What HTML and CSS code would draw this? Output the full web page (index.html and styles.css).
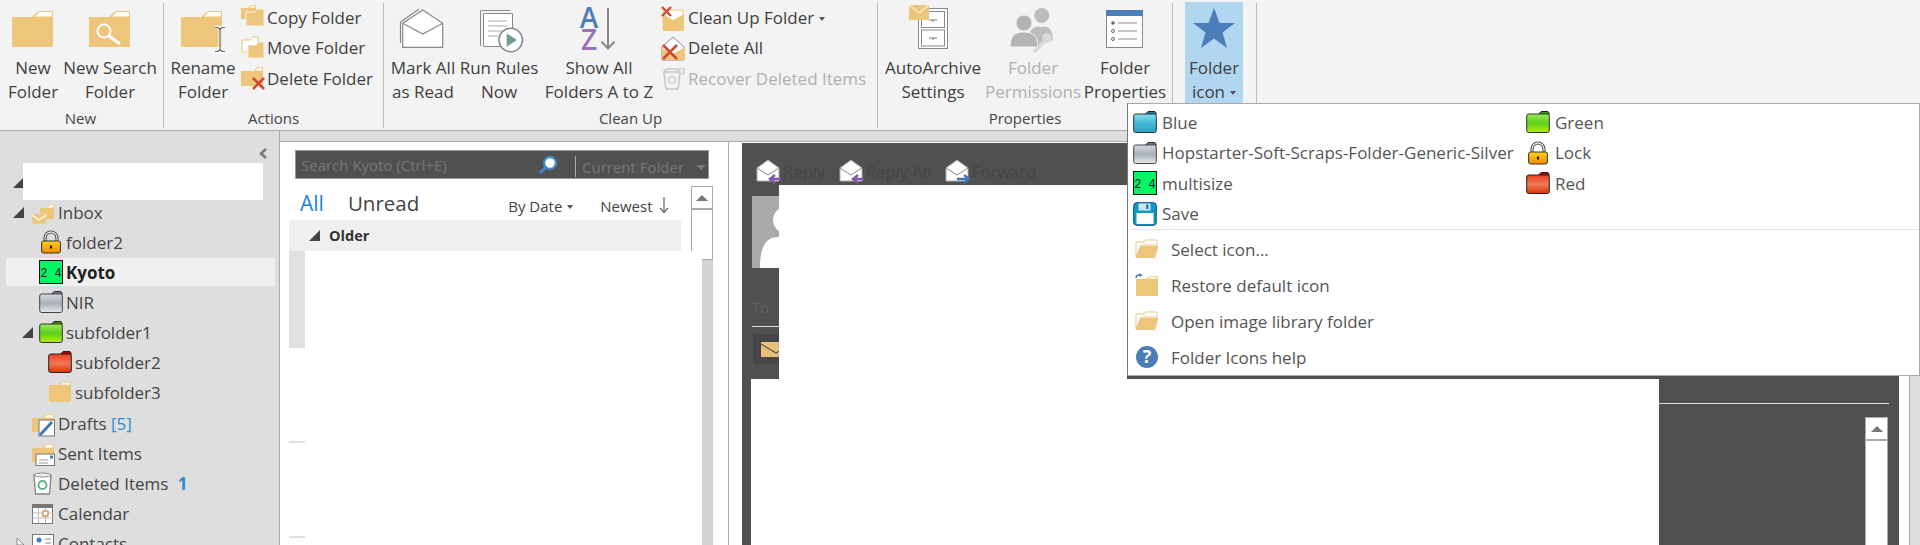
FILE: index.html
```html
<!DOCTYPE html>
<html lang="en">
<head>
<meta charset="utf-8">
<title>Outlook Folder Icons</title>
<link rel="stylesheet" href="styles.css">
</head>
<body>
<svg class="defs" aria-hidden="true">
  <defs>
    <linearGradient id="g-blue" x1="0" y1="0" x2="0" y2="1"><stop offset="0" stop-color="#8adcee"/><stop offset=".5" stop-color="#45b8d6"/><stop offset="1" stop-color="#2aa0c4"/></linearGradient>
    <linearGradient id="g-silver" x1="0" y1="0" x2="0" y2="1"><stop offset="0" stop-color="#d6dbe0"/><stop offset=".5" stop-color="#a7afb8"/><stop offset="1" stop-color="#e6e9ec"/></linearGradient>
    <linearGradient id="g-green" x1="0" y1="0" x2="0" y2="1"><stop offset="0" stop-color="#9cec52"/><stop offset=".5" stop-color="#5ccf1c"/><stop offset="1" stop-color="#b4ec08"/></linearGradient>
    <linearGradient id="g-red" x1="0" y1="0" x2="0" y2="1"><stop offset="0" stop-color="#e8401c"/><stop offset=".5" stop-color="#f0785a"/><stop offset="1" stop-color="#d83800"/></linearGradient>
    <linearGradient id="g-gold" x1="0" y1="0" x2="0" y2="1"><stop offset="0" stop-color="#ffd21e"/><stop offset="1" stop-color="#f58a00"/></linearGradient>
    <symbol id="gf-blue" viewBox="0 0 24 24"><path d="M13 3.5 15 1.5H22L23 3V5H13Z" fill="#1c7fa0" stroke="#222"/><rect x=".7" y="4" width="22.6" height="18.5" rx="2" fill="url(#g-blue)" stroke="#333"/></symbol>
    <symbol id="gf-silver" viewBox="0 0 24 24"><path d="M13 3.5 15 1.5H22L23 3V5H13Z" fill="#6f7983" stroke="#333"/><rect x=".7" y="4" width="22.6" height="18.5" rx="2" fill="url(#g-silver)" stroke="#444"/></symbol>
    <symbol id="gf-green" viewBox="0 0 24 24"><path d="M13 3.5 15 1.5H22L23 3V5H13Z" fill="#2b9a10" stroke="#222"/><rect x=".7" y="4" width="22.6" height="18.5" rx="2" fill="url(#g-green)" stroke="#333"/></symbol>
    <symbol id="gf-red" viewBox="0 0 24 24"><path d="M13 3.5 15 1.5H22L23 3V5H13Z" fill="#b80000" stroke="#222"/><rect x=".7" y="4" width="22.6" height="18.5" rx="2" fill="url(#g-red)" stroke="#222"/></symbol>
    <symbol id="ic-lock" viewBox="0 0 24 24"><path d="M6 12V8a6 6 0 0 1 12 0v4" fill="none" stroke="#333" stroke-width="3"/><path d="M6 12V8a6 6 0 0 1 12 0v4" fill="none" stroke="#e4e4e4" stroke-width="1.3"/><rect x="2.6" y="11" width="18.8" height="12" rx="2" fill="url(#g-gold)" stroke="#333"/><rect x="11" y="15.5" width="2" height="3" fill="#111"/></symbol>
    <symbol id="ic-multi" viewBox="0 0 24 24"><rect x=".5" y=".5" width="23" height="23" fill="#06f566" stroke="#111"/><text x="12" y="16.5" class="multi-txt" text-anchor="middle">2 4</text></symbol>
    <symbol id="ic-save" viewBox="0 0 24 24"><rect x=".7" y=".7" width="22.6" height="22.6" rx="3" fill="#0a9ac8" stroke="#0b4f78"/><rect x="5.5" y="1.5" width="12" height="7" fill="#cfe4ee"/><rect x="13" y="2.5" width="2.5" height="4.5" fill="#2d7ea8"/><rect x="3.5" y="11" width="17" height="11" fill="#fff"/></symbol>
    <symbol id="ic-open" viewBox="0 0 24 24"><path d="M1 20V5H9L10.5 3H22V8H6Z" fill="#fff" stroke="#edc67c"/><path d="M1 21 5.5 9H23.5L20 21Z" fill="#edc67c"/></symbol>
    <symbol id="ic-folder" viewBox="0 0 24 24"><path d="M1 5H11L14 2H23V22H1Z" fill="#edc67c"/><path d="M12 5 14.5 2.6H22.4V5Z" fill="#fff" stroke="#edc67c" stroke-width=".7"/></symbol>
    <symbol id="ic-restore" viewBox="0 0 24 24"><path d="M1 6H11L14 3H23V23H1Z" fill="#edc67c"/><path d="M12 6 14.5 3.6H22.4V6Z" fill="#fff" stroke="#edc67c" stroke-width=".7"/><path d="M1 5C1 2.5 3 1.5 5.5 2" fill="none" stroke="#3f74b0" stroke-width="1.4"/><path d="M4.5 0 7.5 2.2 4.5 4Z" fill="#3f74b0"/></symbol>
    <symbol id="ic-bgfolder" viewBox="0 0 24 24"><path d="M1 7H12L15 3H23V21H1Z" fill="#edc67c"/><path d="M13 7 15.3 3.6H22.4V7Z" fill="#fff" stroke="#edc67c" stroke-width=".7"/></symbol>
  </defs>
</svg>

<header class="ribbon">
  <section class="group group-new">
    <div class="group-items">
      <div class="big w66"><svg class="big-icon" viewBox="0 0 48 48"><path d="M3 9H23L30 3H44V39H3Z" fill="#edc67c"/><path d="M25 9 30.5 3.5H43.5V9Z" fill="#fff" stroke="#edc67c"/></svg><span class="big-label">New<br>Folder</span></div>
      <div class="big w88"><svg class="big-icon" viewBox="0 0 48 48"><path d="M3 9H23L30 3H44V39H3Z" fill="#edc67c"/><path d="M25 9 30.5 3.5H43.5V9Z" fill="#fff" stroke="#edc67c"/><circle cx="18" cy="23" r="6.5" fill="none" stroke="#fff" stroke-width="2"/><path d="M23 28 34 36" stroke="#fff" stroke-width="3"/></svg><span class="big-label">New Search<br>Folder</span></div>
    </div>
    <div class="group-label">New</div>
  </section>
  <section class="group group-actions">
    <div class="group-items">
      <div class="big w76"><svg class="big-icon" viewBox="0 0 48 48"><path d="M2 9H22L29 3H43V39H2Z" fill="#edc67c"/><path d="M24 9 29.5 3.5H42.5V9Z" fill="#fff" stroke="#edc67c"/><path d="M41 20V43M36 19h3l2 2 2-2h3M36 44h3l2-2 2 2h3" fill="none" stroke="#fff" stroke-width="3"/><path d="M41 20V43M36 19.5h3l2 2 2-2h3M36 43.5h3l2-2 2 2h3" fill="none" stroke="#666" stroke-width="1.2"/></svg><span class="big-label">Rename<br>Folder</span></div>
      <div class="stack">
        <div class="small"><svg class="small-icon" viewBox="0 0 24 24"><path d="M0 3H7L10 0H15V14H0Z" fill="#edc67c"/><path d="M8 3 10.3.6H14.4V3Z" fill="#fff" stroke="#edc67c" stroke-width=".7"/><path d="M5 7H14L16 4H23V21H5Z" fill="#edc67c" stroke="#f3f3f3"/></svg><span>Copy Folder</span></div>
        <div class="small"><svg class="small-icon" viewBox="0 0 24 24"><path d="M1 4H9L12 1H17V16H1Z" fill="#fff" stroke="#edc67c"/><path d="M7 9H15L17 6H23V22H7Z" fill="#edc67c" stroke="#f3f3f3"/></svg><span>Move Folder</span></div>
        <div class="small"><svg class="small-icon" viewBox="0 0 24 24"><path d="M0 5H13L16 1H22V20H0Z" fill="#edc67c"/><path d="M14 5 16.3 1.6H21.4V5Z" fill="#fff" stroke="#edc67c" stroke-width=".7"/><path d="M12 12 23 23M23 12 12 23" stroke="#d0492f" stroke-width="2.6"/></svg><span>Delete Folder</span></div>
      </div>
    </div>
    <div class="group-label">Actions</div>
  </section>
  <section class="group group-clean">
    <div class="group-items">
      <div class="big w76"><svg class="big-icon" viewBox="0 0 48 48"><path d="M1.5 35V14L20 1" fill="none" stroke="#888" stroke-width="1.2"/><path d="M3.7 15.3 23.7 2 43.7 15.3V39.3H3.7Z" fill="#fff" stroke="#888" stroke-width="1.2"/><path d="M3.7 15.3 23.7 26 43.7 15.3" fill="none" stroke="#888" stroke-width="1.2"/></svg><span class="big-label">Mark All<br>as Read</span></div>
      <div class="big w76"><svg class="big-icon" viewBox="0 0 48 48"><path d="M5.5 38V3M5.5 2.5H35" fill="none" stroke="#888"/><path d="M8.5 5.5H37.5V38.5H8.5Z" fill="#fff" stroke="#888"/><path d="M13 13H32M13 18H32M13 23H28M13 28H24" stroke="#aaa"/><circle cx="35.7" cy="32" r="11.7" fill="#fff" stroke="#888" stroke-width="1.6"/><path d="M31.7 25.5 42 32 31.7 38.7Z" fill="#6e9f8e"/></svg><span class="big-label">Run Rules<br>Now</span></div>
      <div class="big w124"><svg class="big-icon" viewBox="0 0 48 48"><text x="14" y="20" class="az az-a" text-anchor="middle">A</text><text x="14" y="41.5" class="az az-z" text-anchor="middle">Z</text><path d="M33 0V40M26.5 33.5 33 40.5 39.5 33.5" fill="none" stroke="#888" stroke-width="2"/></svg><span class="big-label">Show All<br>Folders A to Z</span></div>
      <div class="stack stack-clean">
        <div class="small"><svg class="small-icon" viewBox="0 0 24 24"><path d="M2 5H22V24H2Z" fill="#fff" stroke="#edc67c"/><path d="M2 9 12 15 23 9V26H2Z" fill="#edc67c"/><path d="M1 2 10 11M10 2 1 11" stroke="#d0492f" stroke-width="2.4"/></svg><span class="caret-text">Clean Up Folder<i class="caret"></i></span></div>
        <div class="small"><svg class="small-icon" viewBox="0 0 24 24"><path d="M1 11 12 1 23 11V24H1Z" fill="#fff" stroke="#888"/><path d="M1 12 12 18 24 11V24H1Z" fill="#edc67c"/><path d="M2 9 16 23M16 9 2 23" stroke="#d0492f" stroke-width="2.6" fill="none"/></svg><span>Delete All</span></div>
        <div class="small is-off"><svg class="small-icon" viewBox="0 0 24 24"><path d="M3 6H19L17 23H5Z" fill="#f3f3f3" stroke="#c8c8c8" stroke-width="1.6"/><path d="M3 5C6 2 15 2 19 5" fill="none" stroke="#c8c8c8" stroke-width="1.6"/><circle cx="11" cy="14" r="3.5" fill="none" stroke="#cfcfcf" stroke-width="1.6"/><path d="M17 3C21 1 24 4 23 8M23 2V8H18" fill="none" stroke="#c8c8c8"/></svg><span>Recover Deleted Items</span></div>
      </div>
    </div>
    <div class="group-label">Clean Up</div>
  </section>
  <section class="group group-props">
    <div class="group-items">
      <div class="big w110"><svg class="big-icon" viewBox="0 0 48 48"><rect x="9.5" y=".5" width="29" height="40" fill="#fff" stroke="#888"/><rect x="12.5" y="3.5" width="23" height="16" fill="#fff" stroke="#888"/><rect x="12.5" y="22" width="23" height="16" fill="#fff" stroke="#888"/><path d="M20 12H28M24 12V14M20 30H28M24 30V32" stroke="#777"/><path d="M0 -3H20V12H0Z" fill="#edc67c"/><path d="M0 -3 10 5 20 -3" fill="none" stroke="#fff"/></svg><span class="big-label">AutoArchive<br>Settings</span></div>
      <div class="big w90 is-off"><svg class="big-icon" viewBox="0 0 48 48"><circle cx="32.7" cy="7.5" r="7.5" fill="#bdbdbd"/><path d="M20 30C20 20 27 17 33 19 39 17 44 22 44 32L30 38Z" fill="#bdbdbd"/><circle cx="15" cy="15" r="8" fill="#b4b4b4" stroke="#f3f3f3"/><path d="M1 39C1 28 6 24 15 24 24 24 29 28 29 39Z" fill="#b4b4b4" stroke="#f3f3f3"/><path d="M25 44 37 32" stroke="#dcd8d8" stroke-width="3.5"/><circle cx="38" cy="30" r="5" fill="#dcd8d8"/></svg><span class="big-label">Folder<br>Permissions</span></div>
      <div class="big w94"><svg class="big-icon" viewBox="0 0 48 48"><rect x="5.5" y="2.5" width="36" height="37" fill="#fff" stroke="#888"/><rect x="5" y="2" width="37" height="6" fill="#4a7eba"/><circle cx="12" cy="15" r="1.8" fill="#666"/><circle cx="12" cy="23" r="1.5" fill="#fff" stroke="#666"/><circle cx="12" cy="31" r="1.5" fill="#fff" stroke="#666"/><path d="M17 15H36M17 23H36M17 31H36" stroke="#888"/></svg><span class="big-label">Folder<br>Properties</span></div>
    </div>
    <div class="group-label">Properties</div>
  </section>
  <section class="group group-icon">
    <div class="group-items">
      <div class="big w58 is-open"><svg class="big-icon" viewBox="0 0 48 48"><path d="M24 0 29.5 15H45L32.5 24.5 37 40 24 30.5 11 40 15.5 24.5 3 15H18.5Z" fill="#4a7eba"/></svg><span class="big-label">Folder<br>icon<i class="caret"></i></span></div>
    </div>
  </section>
</header>

<main class="main">
  <nav class="nav">
    <div class="nav-top"><svg class="chevron" width="8" height="11" viewBox="0 0 8 11"><path d="M7 1 2 5.5 7 10" fill="none" stroke="#777" stroke-width="2.4"/></svg></div>
    <div class="row l0"><i class="tri"></i></div>
    <div class="row l0"><i class="tri"></i><svg class="ni" viewBox="0 0 24 24"><path d="M9 8H16L18 4H23V19H9Z" fill="#edc67c"/><path d="M16.5 8 18.3 4.6H22.5V8Z" fill="#fff" stroke="#edc67c" stroke-width=".7"/><path d="M1 14H15V24H1Z" fill="#edc67c" stroke="#dedede" stroke-width=".6"/><path d="M1 15 8 20 15 15" fill="none" stroke="#fff" stroke-width="1.2"/></svg><span>Inbox</span></div>
    <div class="row l1"><svg class="ni" viewBox="0 0 24 24"><use href="#ic-lock"/></svg><span>folder2</span></div>
    <div class="row l1 sel"><svg class="ni" viewBox="0 0 24 24"><use href="#ic-multi"/></svg><b>Kyoto</b></div>
    <div class="row l1"><svg class="ni" viewBox="0 0 24 24"><use href="#gf-silver"/></svg><span>NIR</span></div>
    <div class="row l1 has-tri"><i class="tri"></i><svg class="ni" viewBox="0 0 24 24"><use href="#gf-green"/></svg><span>subfolder1</span></div>
    <div class="row l2"><svg class="ni" viewBox="0 0 24 24"><use href="#gf-red"/></svg><span>subfolder2</span></div>
    <div class="row l2"><svg class="ni" viewBox="0 0 24 24"><use href="#ic-folder"/></svg><span>subfolder3</span></div>
    <div class="row l0 gap"><i class="tri none"></i><svg class="ni ni-over" viewBox="0 0 24 24"><use href="#ic-bgfolder"/><rect x="8" y="9" width="15.5" height="16" fill="#fff" stroke="#777"/><path d="M9 24 21 11" stroke="#3f7cc0" stroke-width="3"/></svg><span>Drafts <em class="count">[5]</em></span></div>
    <div class="row l0"><i class="tri none"></i><svg class="ni ni-over" viewBox="0 0 24 24"><use href="#ic-bgfolder"/><rect x="5" y="13" width="18.5" height="11.5" fill="#fff" stroke="#777"/><rect x="19" y="14.5" width="3" height="3" fill="#3f7cc0"/><path d="M8 19H17M8 22H17" stroke="#999"/></svg><span>Sent Items</span></div>
    <div class="row l0"><i class="tri none"></i><svg class="ni" viewBox="0 0 24 24"><path d="M3 4H20L18.5 23H4.5Z" fill="#fff" stroke="#888" stroke-width="1.4"/><ellipse cx="11.5" cy="4" rx="8.5" ry="2" fill="#eee" stroke="#888"/><circle cx="11.5" cy="14" r="4" fill="none" stroke="#5cb08a" stroke-width="1.8"/></svg><span>Deleted Items <strong class="badge">1</strong></span></div>
    <div class="row l0"><i class="tri none"></i><svg class="ni" viewBox="0 0 24 24"><rect x="1.5" y="3.5" width="20" height="19" fill="#fff" stroke="#777"/><rect x="1" y="3" width="21" height="4" fill="#777"/><path d="M1.5 12H22M1.5 17H22M7.5 7V22M14.5 7V22" stroke="#bbb"/><rect x="12" y="10" width="5" height="5" fill="#fff" stroke="#c9632a"/></svg><span>Calendar</span></div>
    <div class="row l0"><svg class="tri-open" width="12" height="12" viewBox="0 0 12 12"><path d="M4 1 11 8H4Z" fill="#fff" stroke="#888"/></svg><svg class="ni" viewBox="0 0 24 24"><rect x="1.5" y="3.5" width="21" height="17" fill="#fff" stroke="#777"/><circle cx="8" cy="9" r="2.5" fill="#3f7cc0"/><path d="M14 8H20M14 12H20" stroke="#888"/></svg><span>Contacts</span></div>
    <div class="nav-mask"></div>
  </nav>

  <div class="content">
    <section class="list">
      <div class="search">
        <span class="search-text">Search Kyoto (Ctrl+E)</span>
        <svg class="search-icon" width="20" height="20" viewBox="0 0 20 20"><circle cx="12" cy="8" r="6" fill="#fff" stroke="#3f86c8" stroke-width="2.4"/><path d="M7.5 12.5 2 18" stroke="#3f86c8" stroke-width="3"/></svg>
        <span class="scope">Current Folder<i class="caret dim"></i></span>
      </div>
      <div class="list-body">
        <div class="list-col">
          <div class="tabs">
            <span class="tab-all">All</span>
            <span class="tab-unread">Unread</span>
            <span class="sort-date">By Date<i class="caret"></i></span>
            <span class="sort-order">Newest<svg class="sort-arrow" width="10" height="17" viewBox="0 0 10 17"><path d="M5 0V15M1 11 5 15.5 9 11" fill="none" stroke="#666" stroke-width="1.2"/></svg></span>
          </div>
          <div class="older"><i class="tri small-tri"></i><b>Older</b></div>
          <div class="msg first"></div>
          <div class="msg"></div>
          <div class="msg"></div>
        </div>
        <div class="scroll">
          <div class="sb-up"><i class="sb-arrow"></i></div>
          <div class="sb-thumb"></div>
          <div class="sb-track"></div>
        </div>
      </div>
      <div class="list-mask"></div>
    </section>

    <section class="reading">
      <div class="actions">
        <span class="act"><svg class="act-ic" viewBox="0 0 24 24"><path d="M1 9 12 1 23 9V22H1Z" fill="#fff" stroke="#aaa"/><path d="M1 9 12 16 23 9" fill="none" stroke="#888"/><path d="M25 20H15M19 16 14 20 19 24" fill="none" stroke="#8455ad" stroke-width="2.4"/></svg>Reply</span>
        <span class="act act-all"><svg class="act-ic" viewBox="0 0 24 24"><path d="M1 9 12 1 23 9V22H1Z" fill="#fff" stroke="#aaa"/><path d="M1 9 12 16 23 9" fill="none" stroke="#888"/><path d="M25 20H15M19 16 14 20 19 24" fill="none" stroke="#8455ad" stroke-width="2.4"/></svg>Reply All</span>
        <span class="act act-fwd"><svg class="act-ic" viewBox="0 0 24 24"><path d="M1 9 12 1 23 9V22H1Z" fill="#fff" stroke="#aaa"/><path d="M1 9 12 16 23 9" fill="none" stroke="#888"/><path d="M12 20H23M19 16 24 20 19 24" fill="none" stroke="#3f74b0" stroke-width="2.4"/></svg>Forward</span>
      </div>
      <div class="avatar"><svg width="60" height="72" viewBox="0 0 60 72"><circle cx="34" cy="24" r="13" fill="#fff"/><path d="M8 72C8 50 14 41 26 41H42V72Z" fill="#fff"/></svg></div>
      <div class="to">To</div>
      <div class="attach"><svg width="30" height="15" viewBox="0 0 30 15"><rect width="30" height="15" fill="#e8c07c"/><path d="M0 2 15 11 30 2" fill="none" stroke="#555" stroke-width="1.2"/></svg></div>
      <div class="rule"></div>
      <div class="read-body">
        <div class="scroll scroll-r">
          <div class="sb-up"><i class="sb-arrow"></i></div>
          <div class="sb-thumb fill"></div>
        </div>
      </div>
      <div class="mask mask-a"></div>
      <div class="mask mask-b"></div>
    </section>
  </div>
  <div class="edge"></div>
</main>

<aside class="menu">
  <div class="menu-grid">
    <div class="mi"><svg class="mi-ic" viewBox="0 0 24 24"><use href="#gf-blue"/></svg>Blue</div>
    <div class="mi"><svg class="mi-ic" viewBox="0 0 24 24"><use href="#gf-green"/></svg>Green</div>
    <div class="mi"><svg class="mi-ic" viewBox="0 0 24 24"><use href="#gf-silver"/></svg>Hopstarter-Soft-Scraps-Folder-Generic-Silver</div>
    <div class="mi"><svg class="mi-ic" viewBox="0 0 24 24"><use href="#ic-lock"/></svg>Lock</div>
    <div class="mi"><svg class="mi-ic" viewBox="0 0 24 24"><use href="#ic-multi"/></svg>multisize</div>
    <div class="mi"><svg class="mi-ic" viewBox="0 0 24 24"><use href="#gf-red"/></svg>Red</div>
    <div class="mi"><svg class="mi-ic" viewBox="0 0 24 24"><use href="#ic-save"/></svg>Save</div>
  </div>
  <div class="menu-sep"></div>
  <div class="mc"><svg class="mc-ic" viewBox="0 0 24 24"><use href="#ic-open"/></svg>Select icon...</div>
  <div class="mc"><svg class="mc-ic" viewBox="0 0 24 24"><use href="#ic-restore"/></svg>Restore default icon</div>
  <div class="mc"><svg class="mc-ic" viewBox="0 0 24 24"><use href="#ic-open"/></svg>Open image library folder</div>
  <div class="mc"><svg class="mc-ic" viewBox="0 0 24 24"><circle cx="12" cy="12" r="11" fill="#4a7eb5"/><text x="12" y="18" class="help-q" text-anchor="middle">?</text></svg>Folder Icons help</div>
</aside>
</body>
</html>
```
FILE: styles.css
```css
* { box-sizing: border-box; }
html, body { margin: 0; padding: 0; }
body {
  position: relative;
  width: 1920px;
  height: 545px;
  overflow: hidden;
  background: #dedede;
  font-family: "Open Sans", "Noto Sans", sans-serif;
  font-size: 17px;
  color: #444;
}
i, em { font-style: normal; }
.defs { position: absolute; width: 0; height: 0; }
.multi-txt { font-family: "Liberation Mono", monospace; font-size: 12px; font-weight: 400; fill: #111; }
.az { font-family: "Open Sans", sans-serif; font-size: 28px; font-weight: 600; }
.az-a { fill: #4a7eba; }
.az-z { fill: #9b72b8; }
.help-q { font-family: "Open Sans", sans-serif; font-size: 18px; font-weight: 700; fill: #fff; }

/* Ribbon */
.ribbon {
  display: flex;
  height: 131px;
  background: #f3f3f3;
  border-bottom: 1px solid #aaa;
}
.group {
  position: relative;
  height: 125px;
  margin-top: 3px;
  border-right: 1px solid #bbb;
  display: flex;
  flex-direction: column;
}
.group-new { width: 164px; }
.group-actions { width: 220px; }
.group-clean { width: 494px; }
.group-props { width: 295px; }
.group-icon { width: 84px; }
.group-items { display: flex; height: 103px; }
.group-actions .group-items { padding-left: 1px; }
.group-clean .group-items { padding-left: 1px; }
.group-icon .group-items { padding-left: 12px; }
.group-label {
  text-align: center;
  font-size: 15px;
  line-height: 20px;
  padding-top: 2px;
  color: #444;
}
.group-new .group-label { padding-right: 2px; }
.big {
  display: flex;
  flex-direction: column;
  align-items: center;
  padding-top: 5px;
  flex: none;
  white-space: nowrap;
}
.w58 { width: 58px; }
.w66 { width: 66px; }
.w76 { width: 76px; }
.w88 { width: 88px; }
.w90 { width: 90px; }
.w94 { width: 94px; }
.w110 { width: 110px; }
.w124 { width: 124px; }
.big-icon { width: 48px; height: 48px; flex: none; overflow: visible; }
.big-label { text-align: center; line-height: 24px; color: #3f3f3f; }
.is-off, .is-off .big-label { color: #b0b0b0; }
.is-open { background: #b1d6f0; margin-top: -1px; padding-top: 6px; height: 101px; }
.stack { display: flex; flex-direction: column; flex: none; margin-top: -1px; }
.small {
  display: flex;
  align-items: center;
  height: 30.5px;
  white-space: nowrap;
  color: #3f3f3f;
}
.small.is-off { color: #b0b0b0; }
.small-icon { width: 24px; height: 24px; margin-right: 2px; flex: none; overflow: visible; }
.stack-clean .small-icon { margin-right: 3px; }
.caret {
  display: inline-block;
  width: 0;
  height: 0;
  margin-left: 5px;
  vertical-align: 3px;
  border-left: 3.5px solid transparent;
  border-right: 3.5px solid transparent;
  border-top: 4px solid #555;
}
.caret.dim { border-top-color: #777; margin-left: 12px; border-left-width: 5px; border-right-width: 5px; border-top-width: 5px; }

/* Main */
.main { display: flex; height: 414px; }
.nav {
  position: relative;
  width: 280px;
  flex: none;
  height: 414px;
  overflow: hidden;
  border-right: 1px solid #aaa;
  background: #dedede;
}
.nav-top { height: 36px; display: flex; justify-content: flex-end; padding: 17px 12px 0 0; }
.chevron { display: block; }
.row {
  display: flex;
  align-items: center;
  height: 30px;
  margin-left: 6px;
  margin-right: 4px;
  white-space: nowrap;
  color: #444;
}
.l0 { padding-left: 7px; }
.l1 { padding-left: 33px; }
.l1.has-tri { padding-left: 16px; }
.l2 { padding-left: 42px; }
.gap { margin-top: 1px; }
.sel { background: #f0f0f0; height: 28px; margin-top: 1px; margin-bottom: 1px; color: #222; }
.tri {
  display: block;
  flex: none;
  width: 0;
  height: 0;
  margin-right: 7px;
  border-bottom: 11px solid #444;
  border-left: 11px solid transparent;
}
.tri.none { border-color: transparent; }
.has-tri .tri { margin-right: 6px; }
.tri-open { flex: none; margin-right: 6px; }
.ni { width: 24px; height: 24px; margin-right: 3px; flex: none; }
.ni-over { overflow: visible; }
.count { color: #2a8dd4; }
.badge { color: #2a8dd4; margin-left: 5px; font-weight: 700; }
.nav-mask { position: absolute; left: 23px; top: 32px; width: 240px; height: 37px; background: #fff; }

.content {
  display: flex;
  width: 1629px;
  height: 404px;
  margin-top: 10px;
  background: #fff;
  border-top: 1px solid #aaa;
  flex: none;
}
.edge { width: 11px; border-left: 1px solid #aaa; margin-top: 11px; }

/* List */
.list {
  position: relative;
  width: 449px;
  flex: none;
  border-right: 1px solid #aaa;
  padding-top: 8px;
}
.search {
  display: flex;
  align-items: center;
  width: 414px;
  height: 29px;
  margin-left: 15px;
  background: #505050;
  border: 1px solid #999;
  color: #777;
  padding-left: 5px;
  font-size: 15px;
}
.search-text { width: 237px; white-space: nowrap; }
.search-icon { flex: none; margin-right: 17px; }
.scope { border-left: 1px solid #aaa; padding-left: 6px; height: 21px; line-height: 23px; white-space: nowrap; margin-top: 3px; }
.list-body { display: flex; margin-top: 7px; margin-left: 9px; }
.list-col { width: 392px; flex: none; }
.tabs { position: relative; display: flex; align-items: center; height: 34px; padding-left: 11px; }
.tab-all { color: #1e82d8; font-size: 21px; margin-right: 24px; }
.tab-unread { font-size: 20.5px; color: #444; margin-right: 89px; }
.sort-date { font-size: 15px; margin-top: 5px; width: 92px; white-space: nowrap; }
.sort-order { font-size: 15px; margin-top: 5px; white-space: nowrap; }
.sort-arrow { margin-left: 6px; vertical-align: -2px; }
.older { display: flex; align-items: center; height: 31px; background: #efefef; padding-left: 20px; font-size: 14.5px; }
.older b { color: #333; }
.small-tri { margin-right: 9px; }
.msg { width: 16px; height: 95px; border-bottom: 2px solid #e0e0e0; }
.msg.first { height: 97px; background: #e0e0e0; border: 0; }
.scroll { width: 22px; margin-left: 10px; flex: none; background: #d4d4d4; display: flex; flex-direction: column; height: 359px; }
.sb-up { height: 23px; background: #fff; border: 1px solid #aaa; display: flex; align-items: center; justify-content: center; flex: none; }
.sb-arrow { width: 0; height: 0; border-left: 6px solid transparent; border-right: 6px solid transparent; border-bottom: 6px solid #777; }
.sb-thumb { height: 51px; background: #fff; border: 1px solid #aaa; flex: none; }
.sb-track { flex: 1; }
.list-mask { position: absolute; left: 25px; top: 109px; width: 397px; height: 300px; background: #fff; }

/* Reading pane */
.reading {
  position: relative;
  width: 1157px;
  flex: none;
  margin: 1px 0 0 13px;
  height: 402px;
  background: #505050;
  overflow: hidden;
}
.actions { display: flex; height: 53px; padding: 16px 0 0 14px; color: #454545; font-size: 16.5px; }
.act { display: flex; align-items: flex-start; white-space: nowrap; line-height: 26px; }
.act-ic { width: 24px; height: 24px; margin-right: 3px; overflow: visible; }
.act-all { margin-left: 14px; }
.act-fwd { margin-left: 14px; }
.avatar { width: 60px; height: 72px; margin-left: 10px; background: #aaa; }
.avatar svg { display: block; }
.to { height: 32px; margin: 27px 10px 0 10px; border-bottom: 1px solid #ddd; color: #606060; font-size: 15px; line-height: 24px; }
.attach { width: 100px; height: 30px; margin: 7px 0 0 11px; background: #45454a; padding: 8px 0 0 8px; }
.attach svg { display: block; }
.rule { height: 1px; margin: 39px 10px 0 10px; background: #ddd; }
.read-body { display: flex; justify-content: flex-end; padding: 13px 11px 0 0; }
.scroll-r { width: 23px; margin: 0; background: #fff; height: 200px; }
.sb-thumb.fill { flex: 1; height: auto; }
.mask { position: absolute; background: #fff; }
.mask-a { left: 37px; top: 42px; width: 348px; height: 194px; }
.mask-b { left: 9px; top: 236px; width: 908px; height: 170px; }

/* Menu */
.menu {
  position: absolute;
  left: 1127px;
  top: 103px;
  width: 793px;
  height: 273px;
  background: #fff;
  border: 1px solid #aaa;
  border-left-color: #777;
  padding-top: 3px;
  color: #555;
}
.menu-grid { display: grid; grid-template-columns: 393px 1fr; grid-auto-rows: 30.5px; padding-left: 5px; }
.mi { display: flex; align-items: center; white-space: nowrap; }
.mi-ic { width: 24px; height: 24px; margin-right: 5px; flex: none; }
.menu-sep { height: 1px; margin: 0 0 1px 3px; background: #e2e2e2; }
.mc { display: flex; align-items: center; height: 36px; padding-left: 7px; white-space: nowrap; }
.mc-ic { width: 24px; height: 24px; margin-right: 12px; flex: none; }
```
